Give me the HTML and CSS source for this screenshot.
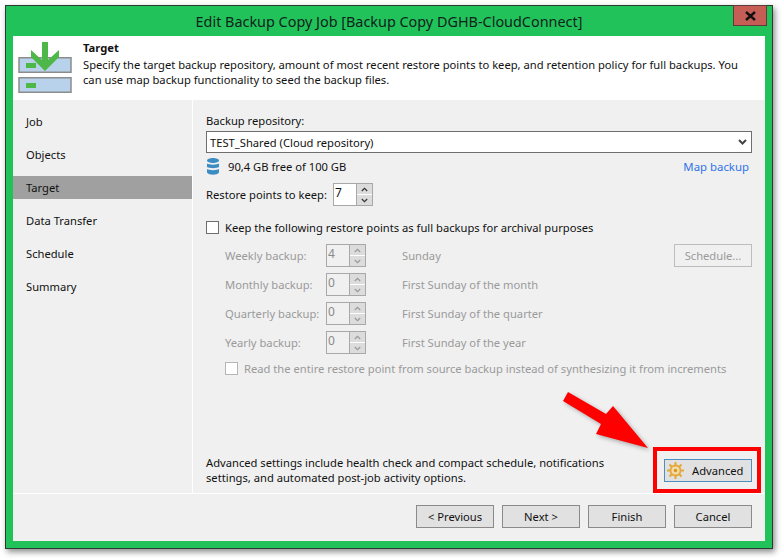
FILE: index.html
```html
<!DOCTYPE html>
<html lang="en">
<head>
<meta charset="utf-8">
<title>Edit Backup Copy Job</title>
<link rel="stylesheet" href="styles.css">
</head>
<body>
<div class="window">
  <div class="titlebar">
    <span class="title">Edit Backup Copy Job [Backup Copy DGHB-CloudConnect]</span>
    <div class="close">
      <svg width="13" height="10" viewBox="0 0 13 10"><path d="M2 1l9 8M11 1l-9 8" stroke="#111" stroke-width="2.4" fill="none"/></svg>
    </div>
  </div>
  <div class="panel">
    <header class="header">
      <svg class="header-icon" width="54" height="54" viewBox="0 0 54 54">
        <rect x="1" y="16.750" width="52" height="14.500" fill="#b8d2ec" stroke="#8c8c8c" stroke-width="1.500"/>
        <rect x="1" y="36.750" width="52" height="14.500" fill="#b8d2ec" stroke="#8c8c8c" stroke-width="1.500"/>
        <rect x="8" y="22" width="10" height="5" fill="#4db848"/>
        <rect x="8" y="42" width="10" height="5" fill="#4db848"/>
        <path d="M24 1h6v18l11-10v7L27 30 13 16V9l11 10z" fill="#4db848"/>
      </svg>
      <div class="header-text">
        <div class="header-title">Target</div>
        <div class="header-desc">Specify the target backup repository, amount of most recent restore points to keep, and retention policy for full backups. You can use map backup functionality to seed the backup files.</div>
      </div>
    </header>
    <div class="body">
      <nav class="sidebar">
        <div class="nav-item">Job</div>
        <div class="nav-item">Objects</div>
        <div class="nav-item active">Target</div>
        <div class="nav-item">Data Transfer</div>
        <div class="nav-item">Schedule</div>
        <div class="nav-item">Summary</div>
      </nav>
      <main class="main">
        <div class="repo-label">Backup repository:</div>
        <div class="select">
          <span>TEST_Shared (Cloud repository)</span>
          <svg width="9" height="6" viewBox="0 0 9 6"><path d="M1 1l3.500 3.500L8 1" stroke="#444" stroke-width="2" fill="none"/></svg>
        </div>
        <div class="free-row">
          <svg class="db-icon" width="12" height="17" viewBox="0 0 12 17">
            <path d="M0 2.500C0 1 3 0 6 0s6 1 6 2.500S9 5 6 5 0 4 0 2.500z" fill="#3c8cc4"/>
            <path d="M0 5.500C2 7 10 7 12 5.500V9C10 10.500 2 10.500 0 9z" fill="#3c8cc4"/>
            <path d="M0 11C2 12.500 10 12.500 12 11v3.500C10 17.500 2 17.500 0 14.500z" fill="#3c8cc4"/>
          </svg>
          <span class="free-text">90,4 GB free of 100 GB</span>
          <a class="link">Map backup</a>
        </div>
        <div class="keep-row">
          <span>Restore points to keep:</span>
          <div class="spinner">
            <span class="spin-value">7</span>
            <div class="spin-btns">
              <div class="spin-btn"><svg width="7" height="5" viewBox="0 0 7 5"><path d="M.8 4l2.700-2.700L6.200 4" stroke="#333" stroke-width="1.200" fill="none"/></svg></div>
              <div class="spin-btn"><svg width="7" height="5" viewBox="0 0 7 5"><path d="M.8 1l2.700 2.700L6.200 1" stroke="#333" stroke-width="1.200" fill="none"/></svg></div>
            </div>
          </div>
        </div>
        <label class="check-row">
          <span class="checkbox"></span>
          <span>Keep the following restore points as full backups for archival purposes</span>
        </label>
        <div class="archive">
          <div class="arch-row">
            <span class="arch-label">Weekly backup:</span>
            <div class="spinner off">
              <span class="spin-value">4</span>
              <div class="spin-btns">
                <div class="spin-btn"><svg width="7" height="5" viewBox="0 0 7 5"><path d="M.8 4l2.700-2.700L6.200 4" stroke="#999" stroke-width="1.200" fill="none"/></svg></div>
                <div class="spin-btn"><svg width="7" height="5" viewBox="0 0 7 5"><path d="M.8 1l2.700 2.700L6.200 1" stroke="#999" stroke-width="1.200" fill="none"/></svg></div>
              </div>
            </div>
            <span class="arch-value">Sunday</span>
            <div class="btn off schedule">Schedule...</div>
          </div>
          <div class="arch-row">
            <span class="arch-label">Monthly backup:</span>
            <div class="spinner off">
              <span class="spin-value">0</span>
              <div class="spin-btns">
                <div class="spin-btn"><svg width="7" height="5" viewBox="0 0 7 5"><path d="M.8 4l2.700-2.700L6.200 4" stroke="#999" stroke-width="1.200" fill="none"/></svg></div>
                <div class="spin-btn"><svg width="7" height="5" viewBox="0 0 7 5"><path d="M.8 1l2.700 2.700L6.200 1" stroke="#999" stroke-width="1.200" fill="none"/></svg></div>
              </div>
            </div>
            <span class="arch-value">First Sunday of the month</span>
          </div>
          <div class="arch-row">
            <span class="arch-label">Quarterly backup:</span>
            <div class="spinner off">
              <span class="spin-value">0</span>
              <div class="spin-btns">
                <div class="spin-btn"><svg width="7" height="5" viewBox="0 0 7 5"><path d="M.8 4l2.700-2.700L6.200 4" stroke="#999" stroke-width="1.200" fill="none"/></svg></div>
                <div class="spin-btn"><svg width="7" height="5" viewBox="0 0 7 5"><path d="M.8 1l2.700 2.700L6.200 1" stroke="#999" stroke-width="1.200" fill="none"/></svg></div>
              </div>
            </div>
            <span class="arch-value">First Sunday of the quarter</span>
          </div>
          <div class="arch-row">
            <span class="arch-label">Yearly backup:</span>
            <div class="spinner off">
              <span class="spin-value">0</span>
              <div class="spin-btns">
                <div class="spin-btn"><svg width="7" height="5" viewBox="0 0 7 5"><path d="M.8 4l2.700-2.700L6.200 4" stroke="#999" stroke-width="1.200" fill="none"/></svg></div>
                <div class="spin-btn"><svg width="7" height="5" viewBox="0 0 7 5"><path d="M.8 1l2.700 2.700L6.200 1" stroke="#999" stroke-width="1.200" fill="none"/></svg></div>
              </div>
            </div>
            <span class="arch-value">First Sunday of the year</span>
          </div>
          <label class="check-row sub off">
            <span class="checkbox"></span>
            <span>Read the entire restore point from source backup instead of synthesizing it from increments</span>
          </label>
        </div>
        <div class="advanced-row">
          <div class="advanced-text">Advanced settings include health check and compact schedule, notifications settings, and automated post-job activity options.</div>
          <div class="btn advanced">
            <svg width="17" height="17" viewBox="0 0 17 17">
              <g stroke="#e3a838" stroke-width="2">
                <path d="M8.500 0v3.500M8.500 13.500V17M0 8.500h3.500M13.500 8.500H17M2.500 2.500L5 5M12 12l2.500 2.500M14.500 2.500L12 5M5 12l-2.500 2.500"/>
              </g>
              <circle cx="8.500" cy="8.500" r="5" fill="#f3dca8" stroke="#e3a838" stroke-width="1.800"/>
              <circle cx="8.500" cy="8.500" r="1.800" fill="#d9952a"/>
            </svg>
            <span>Advanced</span>
          </div>
        </div>
      </main>
    </div>
    <footer class="footer">
      <div class="btn">&lt; Previous</div>
      <div class="btn">Next &gt;</div>
      <div class="btn">Finish</div>
      <div class="btn">Cancel</div>
    </footer>
  </div>
</div>
<div class="red-box"></div>
<svg class="red-arrow" width="90" height="60" viewBox="0 0 90 60">
  <path d="M5 1 L43 23 L50 15 L85 57 L33 43 L38 33 L0 10 Z" fill="#fe0000"/>
</svg>
</body>
</html>
```
FILE: styles.css
```css
* { box-sizing: border-box; }
html, body { margin: 0; padding: 0; }
body {
  width: 782px;
  height: 558px;
  background: #fff;
  position: relative;
  overflow: hidden;
  padding: 5px 0 0 5px;
  font-family: "Noto Sans", "Open Sans", sans-serif;
  font-size: 11.2px;
  line-height: 15px;
  color: #111;
}
.window {
  width: 768px;
  height: 544px;
  background: #21c25a;
  border: 1px solid #2b3a33;
  box-shadow: 2px 3px 6px rgba(0,0,0,.45);
  padding: 0 7px 7px 7px;
  display: flex;
  flex-direction: column;
}
.titlebar {
  height: 30px;
  flex: none;
  display: flex;
  align-items: center;
  justify-content: center;
  position: relative;
}
.title { font-size: 14.4px; color: #10231a; }
.close {
  position: absolute;
  top: -1px;
  right: -2px;
  width: 34px;
  height: 21px;
  background: #c75e55;
  border: 1px solid #5f3b3a;
  display: flex;
  align-items: center;
  justify-content: center;
}
.panel {
  flex: 1;
  background: #f0f0f0;
  display: flex;
  flex-direction: column;
  min-height: 0;
}
.header {
  height: 64px;
  flex: none;
  background: #fff;
  display: flex;
  padding: 4px 20px 0 5px;
  gap: 11px;
}
.header-icon { flex: none; margin-top: 1px; }
.header-text { min-width: 0; }
.header-title { font-weight: 700; margin-bottom: 2px; }
.body {
  height: 394px;
  flex: none;
  display: flex;
  border-bottom: 1px solid #fff;
}
.sidebar {
  width: 180px;
  flex: none;
  border-right: 1px solid #fff;
  padding-top: 10px;
  display: flex;
  flex-direction: column;
  gap: 10px;
}
.nav-item {
  height: 23px;
  padding-left: 13px;
  display: flex;
  align-items: center;
}
.nav-item.active { background: #a0a0a0; }
.main {
  flex: 1;
  min-width: 0;
  padding: 13px 13px 0 13px;
  display: flex;
  flex-direction: column;
}
.repo-label { height: 18px; }
.select {
  height: 22px;
  border: 1px solid #6e6e6e;
  background: #fff;
  display: flex;
  align-items: center;
  justify-content: space-between;
  padding: 0 4px 0 3px;
}
.free-row {
  display: flex;
  align-items: center;
  height: 20px;
  margin-top: 3px;
}
.db-icon { flex: none; margin-left: 1px; }
.free-text { margin-left: 9px; }
.link { margin-left: auto; margin-right: 3px; color: #2f74ea; font-size: 11.4px; }
.keep-row {
  display: flex;
  align-items: center;
  gap: 6px;
  margin-top: 7px;
}
.spinner {
  width: 40px;
  height: 23px;
  border: 1px solid #a8a8a8;
  background: #fff;
  display: flex;
  justify-content: space-between;
}
.spinner.off { background: #f0f0f0; color: #8a8a8a; }
.spin-value { padding-left: 1px; line-height: 18px; font-size: 12px; }
.spin-btns {
  width: 16px;
  flex: none;
  display: flex;
  flex-direction: column;
  gap: 1px;
  background: #fff;
  border-left: 1px solid #a8a8a8;
}
.spin-btn {
  flex: 1;
  background: #dcdcdc;
  display: flex;
  align-items: center;
  justify-content: center;
}
.check-row {
  display: flex;
  align-items: center;
  gap: 6px;
  margin-top: 14px;
}
.checkbox {
  width: 13px;
  height: 13px;
  flex: none;
  border: 1px solid #6e6e6e;
  background: #fff;
}
.archive {
  padding-left: 19px;
  margin-top: 9px;
  color: #9a9a9a;
  display: flex;
  flex-direction: column;
  gap: 6px;
}
.arch-row {
  display: flex;
  align-items: center;
  height: 23px;
}
.arch-label { width: 101px; flex: none; }
.arch-value { margin-left: 36px; }
.schedule { margin-left: auto; width: 78px; height: 22px; }
.btn {
  width: 78px;
  height: 23px;
  flex: none;
  background: #e1e1e1;
  border: 1px solid #8a8a8a;
  display: flex;
  align-items: center;
  justify-content: center;
}
.btn.off { background: #f0f0f0; border-color: #bdbdbd; color: #9a9a9a; }
.check-row.sub { margin-top: 1px; }
.check-row.sub .checkbox { border-color: #b5b5b5; }
.advanced-row {
  margin-top: auto;
  margin-bottom: 8px;
  display: flex;
  align-items: center;
  justify-content: space-between;
}
.advanced-text { width: 420px; }
.btn.advanced {
  width: 88px;
  border-color: #4f8fbf;
  justify-content: flex-start;
  gap: 8px;
  padding-left: 2px;
}
.footer {
  flex: 1;
  display: flex;
  justify-content: flex-end;
  align-items: flex-start;
  gap: 8px;
  padding: 11px 13px 0 0;
}
.red-box {
  position: absolute;
  left: 653px;
  top: 447px;
  width: 108px;
  height: 46px;
  border: 4px solid #fe0000;
}
.red-arrow {
  position: absolute;
  left: 563px;
  top: 391px;
  filter: drop-shadow(2px 2px 2px rgba(0,0,0,.3));
}
```
